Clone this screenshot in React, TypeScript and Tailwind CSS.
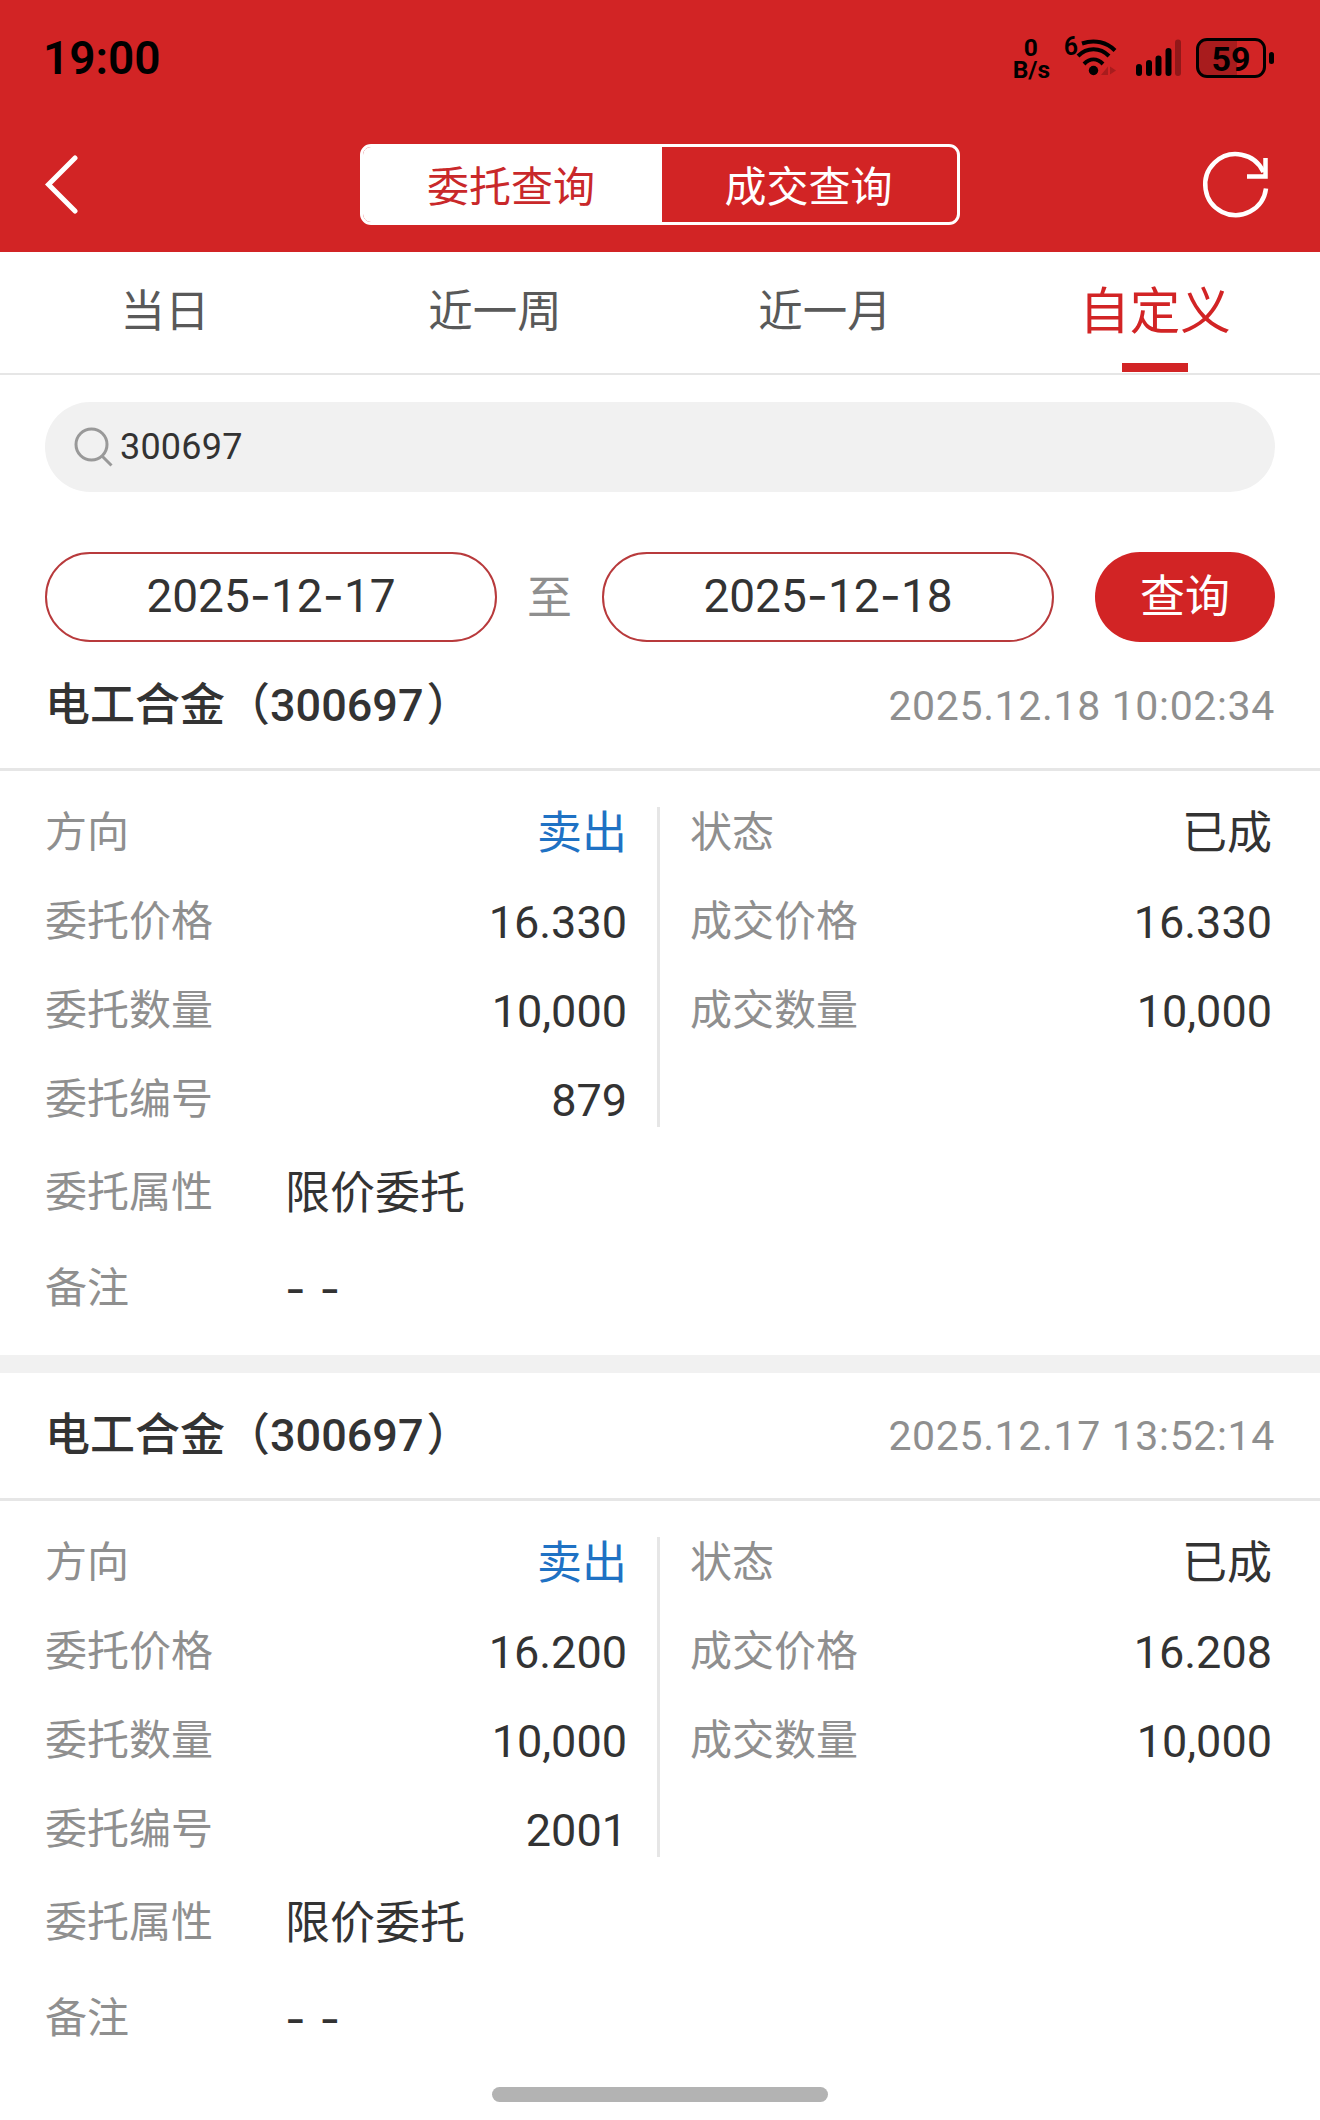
import { useState } from "react";

type Order = {
  name: string;
  code: string;
  time: string;
  left: [string, string][];
  right: [string, string][];
  attribute: string;
  remark: string;
};

const orders: Order[] = [
  {
    name: "电工合金",
    code: "300697",
    time: "2025.12.18 10:02:34",
    left: [
      ["方向", "卖出"],
      ["委托价格", "16.330"],
      ["委托数量", "10,000"],
      ["委托编号", "879"],
    ],
    right: [
      ["状态", "已成"],
      ["成交价格", "16.330"],
      ["成交数量", "10,000"],
    ],
    attribute: "限价委托",
    remark: "- -",
  },
  {
    name: "电工合金",
    code: "300697",
    time: "2025.12.17 13:52:14",
    left: [
      ["方向", "卖出"],
      ["委托价格", "16.200"],
      ["委托数量", "10,000"],
      ["委托编号", "2001"],
    ],
    right: [
      ["状态", "已成"],
      ["成交价格", "16.208"],
      ["成交数量", "10,000"],
    ],
    attribute: "限价委托",
    remark: "- -",
  },
];

const ranges = ["当日", "近一周", "近一月", "自定义"];

function StatusBar() {
  return (
    <div className="flex h-[116px] items-center justify-between pl-[43px] pr-[46px] text-black">
      <span className="text-[46px] leading-none font-semibold">19:00</span>
      <div className="flex h-10 items-center">
        <p className="w-9 pt-px text-center text-[24.5px] leading-[22px] font-bold">
          0<br />
          B/s
        </p>
        <span className="ml-[15px] self-start text-[25px] leading-[18px] font-semibold">6</span>
        <svg className="-ml-[5px]" width="44" height="40" viewBox="0 0 44 40" fill="none">
          <path d="M9 5.500C22 1 34 4.500 42 12.500" stroke="currentColor" strokeWidth="4" />
          <path d="M5 18C14 9 27 9 36 18" stroke="currentColor" strokeWidth="4" />
          <path d="M11 26C17 20 24 20 30 26" stroke="currentColor" strokeWidth="4" />
          <circle cx="20.500" cy="32.500" r="4.700" fill="currentColor" />
          <path d="M35 28.500V37h-7zM37 28.500l6 4-6 4z" fill="#a81c1d" />
        </svg>
        <svg className="ml-[19px]" width="46" height="40" viewBox="0 0 46 40" fill="currentColor">
          <rect x="0" y="26" width="6" height="12" rx="3" />
          <rect x="10" y="22" width="6" height="16" rx="3" />
          <rect x="19.500" y="17.500" width="6" height="20.500" rx="3" />
          <rect x="29.500" y="10" width="6" height="28" rx="3" />
          <rect x="39" y="1.500" width="6" height="36.500" rx="3" fill="#911819" />
        </svg>
        <div className="ml-[14px] flex h-10 w-[70px] items-center justify-center rounded-[11px] border-[3px] border-black bg-linear-to-r from-[#a81c1d] from-60% to-[#d22425] to-60% pt-px text-[34px] leading-none font-bold">
          59
        </div>
        <span className="ml-[3px] h-3 w-[5px] rounded-full bg-black" />
      </div>
    </div>
  );
}

function Row({ label, value }: { label: string; value: string }) {
  const numeric = /^\d/.test(value);
  return (
    <div className="flex h-[89px] items-center justify-between">
      <span className="text-[42px] text-[#8f8f8f]">{label}</span>
      <span
        className={`text-[45px] ${numeric ? "pt-px" : "pt-[2px]"} ${value === "卖出" ? "text-[#1f72c4]" : ""}`}
      >
        {value}
      </span>
    </div>
  );
}

function OrderCard({ order }: { order: Order }) {
  return (
    <article>
      <header className="flex h-[128px] items-center justify-between border-b-[3px] border-[#e6e6e6] px-[45px]">
        <h2 className="text-[45px] font-medium">
          {order.name}（{order.code}
          <span className="ml-[3px]">）</span>
        </h2>
        <time className="pt-px text-[41px] tracking-[0.65px] text-[#8f8f8f]">{order.time}</time>
      </header>
      <div className="flex pt-[17px]">
        <div className="w-[657px] pr-[30px] pl-[45px]">
          {order.left.map(([label, value]) => (
            <Row key={label} label={label} value={value} />
          ))}
        </div>
        <div className="mt-[19px] mb-[17px] w-[3px] bg-[#e6e6e6]" />
        <div className="flex-1 pr-[48px] pl-[30px]">
          {order.right.map(([label, value]) => (
            <Row key={label} label={label} value={value} />
          ))}
        </div>
      </div>
      <div className="flex h-[97px] items-center px-[45px]">
        <span className="w-[240px] text-[42px] text-[#8f8f8f]">委托属性</span>
        <span className="pt-px text-[45px]">{order.attribute}</span>
      </div>
      <div className="flex h-[96px] items-center px-[45px]">
        <span className="w-[240px] text-[42px] text-[#8f8f8f]">备注</span>
        <span className="pb-[2px] font-[Inter] text-[45px] tracking-[0.6px]">{order.remark}</span>
      </div>
    </article>
  );
}

function DateField({ value }: { value: string }) {
  return (
    <button className="h-[90px] w-[452px] rounded-full border-2 border-[#b83a3c] pb-[3px] text-[46px]">
      {value.split("-").map((part, i) => (
        <span key={i}>
          {i > 0 && <span className="font-[Inter]">-</span>}
          {part}
        </span>
      ))}
    </button>
  );
}

export default function App() {
  const [range, setRange] = useState("自定义");
  const [keyword, setKeyword] = useState("300697");

  return (
    <div className="flex h-[2120px] w-[1320px] flex-col overflow-hidden bg-white font-[Roboto,'Noto_Sans_CJK_SC',sans-serif] leading-none text-[#333333]">
      <header className="h-[252px] bg-[#d22425]">
        <StatusBar />
        <nav className="flex h-[136px] items-center justify-between px-[45px] text-white">
          <button aria-label="返回">
            <svg width="70" height="70" viewBox="0 0 70 70" fill="none">
              <path d="M30 9 3.500 35.500 30 62" stroke="currentColor" strokeWidth="5" strokeLinecap="round" />
            </svg>
          </button>
          <div className="flex h-[81px] w-[600px] overflow-hidden rounded-[11px] border-[3px] border-white text-[42px]">
            <button className="w-[299px] bg-white pt-[7px] pr-[3px] text-[#c9282a]">委托查询</button>
            <button className="flex-1 pt-[7px] pr-[2px]">成交查询</button>
          </div>
          <button aria-label="刷新">
            <svg className="overflow-visible" width="70" height="70" viewBox="0 0 70 70" fill="none">
              <path d="M58.500 23A30.500 30.500 0 1 0 61 39.500" stroke="currentColor" strokeWidth="4.500" />
              <path d="M60.500 9V27.500H42" stroke="currentColor" strokeWidth="4.500" />
            </svg>
          </button>
        </nav>
      </header>

      <div className="grid h-[123px] grid-cols-4 border-b-2 border-[#e6e6e6]">
        {ranges.map((item) => (
          <button
            key={item}
            className={`relative ${range === item ? "text-[50.5px] text-[#d22425]" : "text-[44.5px] text-[#595959]"}`}
            onClick={() => setRange(item)}
          >
            {item}
            {range === item && (
              <i className="absolute bottom-px left-1/2 h-[9px] w-[66px] -translate-x-1/2 bg-[#d22425]" />
            )}
          </button>
        ))}
      </div>

      <label className="mx-[45px] mt-[27px] flex h-[90px] items-center rounded-full bg-[#f1f1f1] pl-[29px]">
        <svg width="40" height="40" viewBox="0 0 40 40" fill="none" stroke="#999999" strokeWidth="3">
          <circle cx="17.500" cy="17.500" r="15.500" />
          <path d="m28 29 9.500 9.500" />
        </svg>
        <input
          className="ml-[6px] flex-1 bg-transparent pb-px text-[36px] tracking-[0.2px] outline-none"
          value={keyword}
          onChange={(e) => setKeyword(e.target.value)}
        />
      </label>

      <div className="mt-[60px] flex h-[91px] items-start px-[45px]">
        <DateField value="2025-12-17" />
        <span className="w-[105px] text-center text-[45px] leading-[93px] text-[#8f8f8f]">至</span>
        <DateField value="2025-12-18" />
        <button className="ml-auto h-[90px] w-[180px] rounded-full bg-[#d22425] text-[45px] text-white">
          查询
        </button>
      </div>

      <OrderCard order={orders[0]} />
      <div className="mt-[18px] h-[18px] shrink-0 bg-[#f1f1f1]" />
      <OrderCard order={orders[1]} />

      <div className="mx-auto mt-5 h-[15px] w-[336px] shrink-0 rounded-full bg-[#b3b3b3]" />
    </div>
  );
}
